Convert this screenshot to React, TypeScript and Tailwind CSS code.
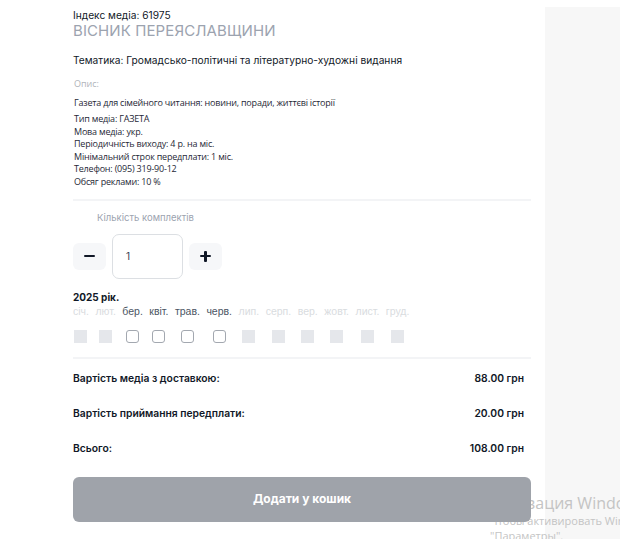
import React from 'react';

const months = [
  { label: 'січ.', active: false },
  { label: 'лют.', active: false },
  { label: 'бер.', active: true },
  { label: 'квіт.', active: true },
  { label: 'трав.', active: true },
  { label: 'черв.', active: true },
  { label: 'лип.', active: false },
  { label: 'серп.', active: false },
  { label: 'вер.', active: false },
  { label: 'жовт.', active: false },
  { label: 'лист.', active: false },
  { label: 'груд.', active: false },
];

const details = [
  'Тип медіа: ГАЗЕТА',
  'Мова медіа: укр.',
  'Періодичність виходу: 4 р. на міс.',
  'Мінімальний строк передплати: 1 міс.',
  'Телефон: (095) 319-90-12',
  'Обсяг реклами: 10 %',
];

const totals = [
  { label: 'Вартість медіа з доставкою:', value: '88.00 грн' },
  { label: 'Вартість приймання передплати:', value: '20.00 грн' },
  { label: 'Всього:', value: '108.00 грн' },
];

export default function App() {
  return (
    <div className="relative h-[539px] w-[620px] overflow-hidden bg-white font-['Inter',sans-serif] text-[#1f2937]">
      <div className="flex h-full">
        {/* Product card */}
        <div className="ml-[73px] w-[458px] shrink-0 pt-[8px]">
          <div className="text-[10.2px] leading-[14px] text-[#111827]">Індекс медіа: 61975</div>
          <h1 className="text-[15px] leading-[18px] tracking-[0.1px] text-[#9ca3af]">ВІСНИК ПЕРЕЯСЛАВЩИНИ</h1>
          <div className="mt-[13px] text-[10.2px] leading-[14px] text-[#111827]">
            Тематика: Громадсько-політичні та літературно-художні видання
          </div>

          <div className="mt-[11px] pl-[1px] font-['Open_Sans',sans-serif] text-[9px] leading-[12px] text-[#b0b4ba]">Опис:</div>
          <div className="mt-[7px] pl-[1px] font-['Open_Sans',sans-serif] text-[9px] leading-[12.5px] tracking-[-0.2px] text-[#1f2937]">
            <p>Газета для сімейного читання: новини, поради, життєві історії</p>
            <div className="mt-[3.5px]">
              {details.map((d) => (
                <p key={d}>{d}</p>
              ))}
            </div>
          </div>

          <div className="mt-[11px] h-[2px] bg-[#f3f4f6]" />

          {/* Quantity */}
          <div className="mt-[9.5px] pl-[24px] text-[9.5px] leading-[14px] text-[#9ca3af]">Кількість комплектів</div>
          <div className="mt-[9px] flex items-center gap-[6px]">
            <button className="flex h-[27px] w-[33px] items-center justify-center rounded-[6px] bg-[#f6f7f9]">
              <span className="block h-[2.5px] w-[11px] rounded-[1px] bg-[#111827]" />
            </button>
            <div className="flex h-[45px] w-[71px] items-center rounded-[7px] border border-[#dcdfe3] pl-[13px] text-[10px] text-[#374151]">
              1
            </div>
            <button className="relative flex h-[27px] w-[33px] items-center justify-center rounded-[6px] bg-[#f6f7f9]">
              <span className="block h-[2.5px] w-[11px] rounded-[1px] bg-[#111827]" />
              <span className="absolute block h-[11px] w-[2.5px] rounded-[1px] bg-[#111827]" />
            </button>
          </div>

          {/* Months */}
          <div className="mt-[11px] text-[10px] font-bold leading-[14px] text-[#111827]">2025 рік.</div>
          <div className="flex gap-[6.5px] font-['Liberation_Sans',sans-serif] text-[10.5px]">
            {months.map((m) => (
              <div key={m.label} className="flex flex-col items-center">
                <span className={m.active ? 'leading-[14px] text-[#4b5563]' : 'leading-[14px] text-[#d9dce0]'}>{m.label}</span>
                <span
                  className={
                    m.active
                      ? 'mt-[12.5px] block h-[13px] w-[13px] rounded-[3px] border border-[#a3a8b0] bg-white'
                      : 'mt-[12.5px] block h-[13px] w-[13px] bg-[#e5e7eb]'
                  }
                />
              </div>
            ))}
          </div>

          <div className="mt-[14px] h-[2px] bg-[#f3f4f6]" />

          {/* Totals */}
          <div className="mt-[2px] pr-[7px]">
            {totals.map((t) => (
              <div key={t.label} className="flex h-[35px] items-center justify-between text-[10.3px] font-semibold text-[#111827]">
                <span>{t.label}</span>
                <span>{t.value}</span>
              </div>
            ))}
          </div>

          <button className="relative z-10 mt-[10.5px] flex h-[45px] w-full items-center justify-center rounded-[6px] bg-[#9fa3aa] text-[12px] font-bold text-white">
            Додати у кошик
          </button>
        </div>

        {/* Side panel */}
        <div className="ml-[14px] mt-[7px] flex-1 bg-[#f7f7f7]" />
      </div>

      {/* Windows activation watermark */}
      <div className="pointer-events-none absolute left-[490px] top-[493px] whitespace-nowrap font-['Open_Sans',sans-serif] text-[#c4c4c4]">
        <div className="text-[16px] leading-[20px]">Активация Windows</div>
        <div className="text-[11px] leading-[16px]">Чтобы активировать Windows, перейдите в раздел</div>
        <div className="text-[11px] leading-[14px]">"Параметры".</div>
      </div>
    </div>
  );
}
